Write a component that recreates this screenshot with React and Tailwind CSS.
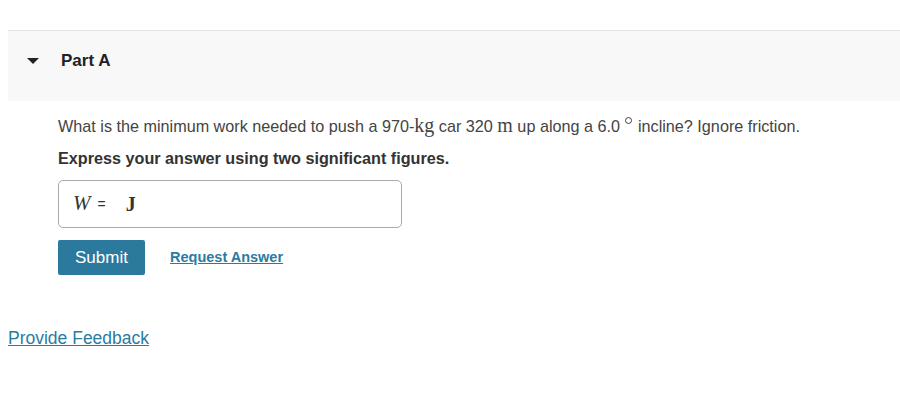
import React from 'react';

const App = () => {
  return (
    <div className="min-h-screen bg-white pt-[30px] pl-2 text-[#333]" style={{ fontFamily: '"Liberation Sans", Arial, sans-serif' }}>
      <div className="border-t border-[#e2e2e2] bg-[#f8f8f8] h-[71px] flex items-start pt-[20px]">
        <span className="mt-[7px] ml-[19px] w-0 h-0 border-l-[6px] border-r-[6px] border-t-[6px] border-l-transparent border-r-transparent border-t-[#222]"></span>
        <span className="ml-[22px] text-[17px] font-bold text-[#222] leading-[20px]">Part A</span>
      </div>

      <div className="pl-[50px] pt-[13px]">
        <p className="text-[16.2px] text-[#444] leading-[22px]">
          What is the minimum work needed to push a 970-
          <span className="text-[20px]" style={{ fontFamily: '"Liberation Serif", serif' }}>kg</span> car 320{' '}
          <span className="text-[20px]" style={{ fontFamily: '"Liberation Serif", serif' }}>m</span> up along a 6.0{' '}
          <span className="inline-block w-[7px] h-[7px] rounded-full border border-[#444] relative -top-[8px] mx-[1px]"></span> incline? Ignore friction.
        </p>
        <p className="mt-[10px] text-[16.2px] font-bold text-[#333] leading-[22px]">
          Express your answer using two significant figures.
        </p>

        <div className="mt-[11px] w-[344px] h-[48px] border border-[#aaa] rounded-[5px] flex items-center pl-[14px] text-[#333]">
          <span className="italic text-[21px]" style={{ fontFamily: '"Liberation Serif", serif' }}>W</span>
          <span className="ml-[7px] text-[14px]">=</span>
          <span className="ml-[20px] text-[20px] font-bold" style={{ fontFamily: '"Liberation Serif", serif' }}>J</span>
        </div>

        <div className="mt-[12px] flex items-center">
          <button className="w-[87px] h-[35px] bg-[#2b7a9e] text-white text-[17px] rounded-[2px] font-medium">
            Submit
          </button>
          <a href="#" className="ml-[25px] text-[14.5px] font-bold text-[#2a7ba3] underline">
            Request Answer
          </a>
        </div>
      </div>

      <div className="mt-[50px]">
        <a href="#" className="text-[17.5px] text-[#2a7ba3] underline">Provide Feedback</a>
      </div>
    </div>
  );
};

export default App;
